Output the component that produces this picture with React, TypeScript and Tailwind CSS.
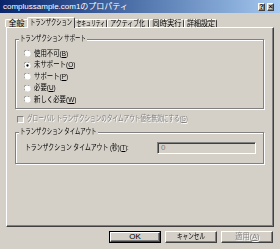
import React from "react";

const FONT = 'font-["Liberation_Sans","Noto_Sans_CJK_JP",sans-serif]';

const raised =
  "border border-t-white border-l-white border-r-[#404040] border-b-[#404040] shadow-[inset_-1px_-1px_0_#808080]";

const tabs = [
  { label: "全般", w: "w-[23px]", sq: "scale-x-100" },
  { label: "トランザクション", w: "w-[48px]", sq: "scale-x-[0.66]", active: true },
  { label: "セキュリティ", w: "w-[33px]", sq: "scale-x-[0.6]" },
  { label: "アクティブ化", w: "w-[42px]", sq: "scale-x-[0.74]" },
  { label: "同時実行", w: "w-[35px]", sq: "scale-x-[0.92]" },
  { label: "詳細設定", w: "w-[33px]", sq: "scale-x-[0.88]" },
];

const radios = [
  { label: "使用不可", key: "B" },
  { label: "未サポート", key: "O", checked: true },
  { label: "サポート", key: "P" },
  { label: "必要", key: "U" },
  { label: "新しく必要", key: "W" },
];

function Radio({ checked }: { checked?: boolean }) {
  return (
    <svg width="7" height="7" viewBox="0 0 12 12" className="shrink-0">
      <circle cx="6" cy="6" r="5.5" fill="#fff" />
      <path d="M1.2 9 A5.2 5.2 0 0 1 9 1.2" stroke="#808080" strokeWidth="1.4" fill="none" />
      <path d="M10.8 3 A5.2 5.2 0 0 1 3 10.8" stroke="#d4d0c8" strokeWidth="1.4" fill="none" />
      {checked && <circle cx="6" cy="6" r="2" fill="#000" />}
    </svg>
  );
}

function Group({
  title,
  titleW,
  className,
  children,
}: {
  title: string;
  titleW: string;
  className: string;
  children: React.ReactNode;
}) {
  return (
    <div
      className={`relative border border-[#808080] shadow-[inset_1px_1px_0_#fff,1px_1px_0_#fff] ${className}`}
    >
      <span
        className={`absolute left-[3px] top-[-6px] ${titleW} whitespace-nowrap bg-[#d4d0c8] pl-[1px] text-[8px] leading-[10px]`}
      >
        <span className="inline-block origin-left scale-x-[0.67]">{title}</span>
      </span>
      {children}
    </div>
  );
}

function Key({ k }: { k: string }) {
  return (
    <>
      (<span className="underline">{k}</span>)
    </>
  );
}

export default function App() {
  return (
    <div className={`h-[249px] w-[280px] overflow-hidden bg-[#d4d0c8] text-black ${FONT}`}>
      <div className="flex h-[13px] items-center justify-between bg-gradient-to-r from-[#0a246a] to-[#a6caf0] pl-[3px] pr-[6px]">
        <span className="text-[8px] leading-[13px] text-white">
          complussample.com1のプロパティ
        </span>
        <div className="flex gap-[2px]">
          <div className={`flex h-[8px] w-[7px] items-center justify-center bg-[#d4d0c8] text-[7px] leading-none font-bold ${raised}`}>
            ?
          </div>
          <div className={`flex h-[8px] w-[7px] items-center justify-center bg-[#d4d0c8] text-[7px] leading-none font-bold ${raised}`}>
            ×
          </div>
        </div>
      </div>

      <div className="flex items-end pl-[5px] pt-[4px]">
        {tabs.map((t) => (
          <div
            key={t.label}
            className={
              t.active
                ? `relative z-10 -mx-[1px] -mb-[1px] flex h-[11px] ${t.w} items-center justify-center whitespace-nowrap rounded-t-[2px] border border-b-0 border-t-white border-l-white border-r-[#404040] bg-[#d4d0c8] text-[8px] leading-none`
                : `flex h-[8px] ${t.w} items-center justify-center whitespace-nowrap rounded-t-[2px] border border-b-0 border-t-white border-l-white border-r-[#404040] text-[8px] leading-none`
            }
          >
            <span className={`inline-block shrink-0 origin-center ${t.sq}`}>{t.label}</span>
          </div>
        ))}
      </div>

      <div className="ml-[6px] h-[200px] w-[268px] border border-t-white border-l-white border-r-[#404040] border-b-[#404040] pl-[8px] pt-[11px] shadow-[inset_-1px_-1px_0_#808080]">
        <Group
          title="トランザクション サポート"
          titleW="w-[68px]"
          className="h-[70px] w-[249px] pl-[8px] pt-[8px]"
        >
          <div className="flex flex-col">
            {radios.map((r) => (
              <div key={r.key} className="flex h-[11.5px] items-center gap-[3px] whitespace-nowrap text-[8px] leading-none">
                <Radio checked={r.checked} />
                <span className="inline-block origin-left scale-x-[0.8]">
                  {r.label}
                  <Key k={r.key} />
                </span>
              </div>
            ))}
          </div>
        </Group>

        <div className="mt-[5px] flex h-[10px] items-center gap-[3px] whitespace-nowrap pl-[2px] text-[8px] leading-none text-[#808080] [text-shadow:1px_1px_0_#fff]">
          <div className="h-[7px] w-[7px] shrink-0 border border-t-[#808080] border-l-[#808080] border-r-white border-b-white bg-[#d4d0c8]" />
          <span className="inline-block origin-left scale-x-[0.7]">
            グローバル トランザクションのタイムアウト値を無効にする
            <Key k="G" />
          </span>
        </div>

        <Group
          title="トランザクション タイムアウト"
          titleW="w-[79px]"
          className="mt-[8px] flex h-[32px] w-[249px] items-center pl-[9px] pr-[7px]"
        >
          <div className="w-[105px] shrink-0 whitespace-nowrap text-[8px] leading-none">
            <span className="inline-block origin-left scale-x-[0.73]">
              トランザクション タイムアウト (秒)
              <Key k="T" />:
            </span>
          </div>
          <div className="ml-auto flex h-[12px] w-[99px] items-center border border-t-[#808080] border-l-[#808080] border-r-white border-b-white pl-[3px] text-[8px] leading-none text-[#808080] shadow-[inset_1px_1px_0_#404040]">
            0
          </div>
        </Group>
      </div>

      <div className="mt-[4px] flex justify-end gap-[4px] pr-[7px]">
        <div className="flex h-[12px] w-[52px] items-center justify-center border border-black bg-[#d4d0c8] text-[8px] leading-none">
          <div className={`flex h-full w-full items-center justify-center ${raised}`}>OK</div>
        </div>
        <div className={`flex h-[12px] w-[52px] items-center justify-center whitespace-nowrap text-[8px] leading-none ${raised}`}>
          <span className="inline-block origin-center scale-x-[0.7]">キャンセル</span>
        </div>
        <div className={`flex h-[12px] w-[52px] items-center justify-center whitespace-nowrap text-[8px] leading-none text-[#808080] [text-shadow:1px_1px_0_#fff] ${raised}`}>
          <span className="inline-block origin-center scale-x-[0.9]">
            適用
            <Key k="A" />
          </span>
        </div>
      </div>
    </div>
  );
}
